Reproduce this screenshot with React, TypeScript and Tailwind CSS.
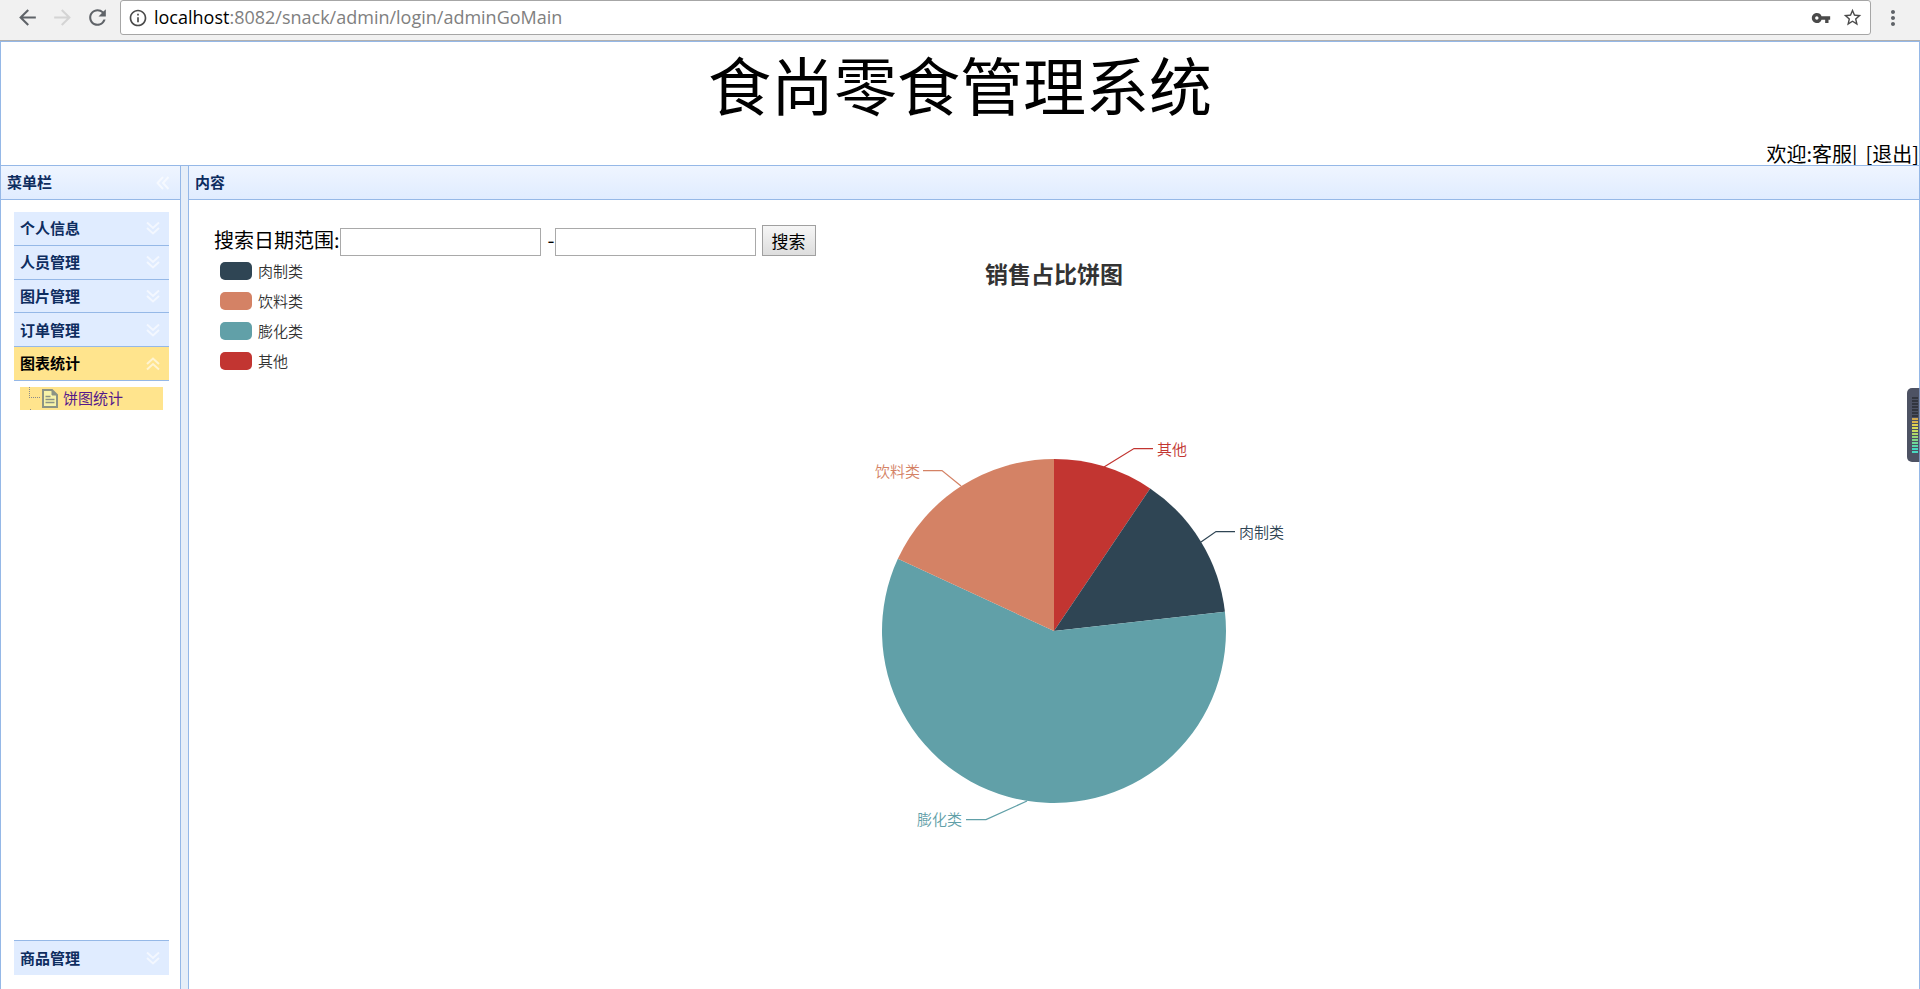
import { ReactNode } from "react";
import clsx from "clsx";
import { MdArrowBack, MdArrowForward, MdInfoOutline, MdMoreVert, MdRefresh, MdStarBorder, MdVpnKey } from "react-icons/md";

interface Slice {
  name: string;
  color: string;
  from: number;
  to: number;
  line: string;
  labelX: number;
  labelY: number;
  anchor: "start" | "end";
}

const RADIUS = 172;

// Angles are clockwise degrees from twelve o'clock
const slices: Slice[] = [
  { name: "其他", color: "#c23531", from: 0, to: 34, line: "50,-164 80,-182.5 99,-182.5", labelX: 103, labelY: -183, anchor: "start" },
  { name: "肉制类", color: "#2f4554", from: 34, to: 83.6, line: "147,-89 162,-99.5 181,-99.5", labelX: 185, labelY: -100, anchor: "start" },
  { name: "膨化类", color: "#61a0a8", from: 83.6, to: 294.8, line: "-27,170 -68,188.5 -88,188.5", labelX: -92, labelY: 187, anchor: "end" },
  { name: "饮料类", color: "#d48265", from: 294.8, to: 360, line: "-93,-145 -112,-160.5 -131,-160.5", labelX: -134, labelY: -161, anchor: "end" },
];

const legend = [
  { name: "肉制类", swatch: "bg-[#2f4554]" },
  { name: "饮料类", swatch: "bg-[#d48265]" },
  { name: "膨化类", swatch: "bg-[#61a0a8]" },
  { name: "其他", swatch: "bg-[#c23531]" },
];

const menus = ["个人信息", "人员管理", "图片管理", "订单管理", "图表统计"];

const point = (deg: number) => {
  const rad = (deg * Math.PI) / 180;
  return `${RADIUS * Math.sin(rad)},${-RADIUS * Math.cos(rad)}`;
};

const slicePath = ({ from, to }: Slice) =>
  `M0,0 L${point(from)} A${RADIUS},${RADIUS} 0 ${to - from > 180 ? 1 : 0} 1 ${point(to)} Z`;

const DoubleChevron = ({ className }: { className?: string }) => (
  <svg viewBox="0 0 14 14" className={clsx("size-[14px] fill-none stroke-white/60 stroke-2", className)}>
    <path d="M1 1.5 L7 7 L13 1.5 M1 7 L7 12.5 L13 7" />
  </svg>
);

const BrowserBar = () => (
  <div className="flex h-[41px] items-start gap-1 border-b border-[#b0b0b0] bg-[#f1f1f1] px-[15px] text-[#5f6368]">
    <div className="flex h-[35px] w-[101px] items-center gap-[10px]">
      <button aria-label="后退"><MdArrowBack className="size-[25px]" /></button>
      <button aria-label="前进" disabled className="text-[#d4d4d4]"><MdArrowForward className="size-[25px]" /></button>
      <button aria-label="刷新"><MdRefresh className="size-[25px]" /></button>
    </div>
    <div className="flex h-[35px] grow items-center rounded-[3px] border border-[#a6a6a6] bg-white px-[7px] text-[#4a4a4a]">
      <MdInfoOutline className="size-[20px]" />
      <p className="ml-[6px] grow font-['Open_Sans','Noto_Sans',sans-serif] text-[18px] font-normal text-[#808080]">
        <span className="text-black">localhost</span>:8082/snack/admin/login/adminGoMain
      </p>
      <MdVpnKey className="mr-[11px] size-[20px]" />
      <MdStarBorder className="size-[21px]" />
    </div>
    <button aria-label="菜单" className="flex h-[35px] items-center pl-[6px]"><MdMoreVert className="size-[24px]" /></button>
  </div>
);

const PanelHeader = ({ title, children }: { title: string; children?: ReactNode }) => (
  <div className="flex h-[35px] items-center justify-between border-y border-[#95b8e7] bg-linear-to-b from-[#eff5ff] to-[#e0ecff] pr-[10px] pl-[6px] text-[15px] font-bold text-[#0e2d5f]">
    <h2>{title}</h2>
    {children}
  </div>
);

const MenuHeader = ({ title, open }: { title: string; open?: boolean }) => (
  <button
    className={clsx(
      "flex w-full flex-1 items-center justify-between border-b border-[#95b8e7] pr-[9px] pl-[6px] text-[15px] font-bold",
      open ? "bg-[#ffe48d] text-black" : "bg-[#e0ecff] text-[#0e2d5f]"
    )}
  >
    {title}
    <DoubleChevron className={open ? "rotate-180" : undefined} />
  </button>
);

const Sidebar = () => (
  <aside className="flex w-[180px] flex-col border-r border-[#95b8e7]">
    <PanelHeader title="菜单栏">
      <DoubleChevron className="rotate-90" />
    </PanelHeader>
    <nav className="flex grow flex-col pt-[12px] pr-[11px] pb-[14px] pl-[13px]">
      <div className="flex h-[169px] flex-col">
        {menus.map((menu) => (
          <MenuHeader key={menu} title={menu} open={menu === "图表统计"} />
        ))}
      </div>
      <div className="grow px-[6px] pt-[6px]">
        <a href="#pie" className="flex h-[23px] items-center bg-[#ffe48d] text-[15px] text-[#551a8b]">
          <svg viewBox="0 0 43 23" className="h-[23px] w-[43px] shrink-0 fill-none">
            <path d="M9.5 0 V11 M9 10.5 H20 M10 22.5 h2" stroke="#8a8a8a" strokeDasharray="1 1" />
            <path d="M23 3 h9 l5 5 v12 h-14 z" fill="#f8f3a8" stroke="#8d9484" strokeWidth="2" />
            <path d="M32 3 v5 h5" fill="#8d9484" stroke="#8d9484" />
            <path d="M25.5 9.5 h5 M25.5 12.5 h9 M25.5 15.5 h9" stroke="#8d9484" strokeWidth="1.5" />
          </svg>
          饼图统计
        </a>
      </div>
      <div className="flex h-[35px] border-t border-[#95b8e7]">
        <button className="flex grow items-center justify-between bg-[#e0ecff] pr-[9px] pl-[6px] text-[15px] font-bold text-[#0e2d5f]">
          商品管理
          <DoubleChevron />
        </button>
      </div>
    </nav>
  </aside>
);

const SearchForm = () => (
  <form className="flex items-end text-[20px] text-black" onSubmit={(e) => e.preventDefault()}>
    <label htmlFor="start" className="leading-[32px]">搜索日期范围:</label>
    <input id="start" type="text" className="h-[28px] w-[201px] border border-[#a9a9a9] bg-white px-1 text-[16px]" />
    <label htmlFor="end" className="ml-[7px] leading-[32px]">-</label>
    <input id="end" type="text" className="h-[28px] w-[201px] border border-[#a9a9a9] bg-white px-1 text-[16px]" />
    <button className="ml-[6px] h-[31px] w-[54px] border border-[#a0a0a0] bg-linear-to-b from-[#f6f6f6] to-[#dddddd] text-[17px] leading-[28px]">
      搜索
    </button>
  </form>
);

const PieChart = () => (
  <section id="pie" className="text-[#333333]">
    <div className="grid grid-cols-[1fr_auto_1fr] pt-[6px]">
      <ul className="flex flex-col gap-[12px] pl-[6px]">
        {legend.map((item) => (
          <li key={item.name} className="flex h-[18px] items-center gap-[6px] text-[15px] font-[350]">
            <span className={clsx("h-[18px] w-[32px] rounded-[5px]", item.swatch)} />
            {item.name}
          </li>
        ))}
      </ul>
      <h3 className="text-[23px] leading-[22px] font-bold">销售占比饼图</h3>
    </div>
    <svg viewBox="-240 -200 480 400" className="mx-auto mt-[61px] h-[400px] w-[480px] font-[350]">
      {slices.map((slice) => (
        <g key={slice.name}>
          <path d={slicePath(slice)} fill={slice.color} />
          <polyline points={slice.line} fill="none" stroke={slice.color} strokeWidth="1.25" />
          <text x={slice.labelX} y={slice.labelY} textAnchor={slice.anchor} dominantBaseline="central" fill={slice.color} fontSize="15">
            {slice.name}
          </text>
        </g>
      ))}
    </svg>
  </section>
);

const meterBars = [
  "bg-[#32363f]", "bg-[#32363f]", "bg-[#32363f]", "bg-[#32363f]", "bg-[#32363f]", "bg-[#32363f]", "bg-[#32363f]",
  "bg-[#d0a850]", "bg-[#d9b54a]", "bg-[#e0d050]", "bg-[#d8dc58]", "bg-[#c8dc60]", "bg-[#b0d868]",
  "bg-[#98d878]", "bg-[#80d888]", "bg-[#70d898]", "bg-[#58d8a8]", "bg-[#48d8c0]", "bg-[#48d8c0]",
];

const EdgeMeter = () => (
  <div className="absolute top-[388px] right-0 flex h-[74px] w-[13px] flex-col items-end justify-center gap-[1px] rounded-l-[5px] border-r border-r-[#7a90b8] bg-[#4d5263] pr-[1px]">
    {meterBars.map((bar, i) => (
      <span key={i} className={clsx("h-[2px] w-[6px]", bar)} />
    ))}
  </div>
);

const App = () => (
  <div className="relative flex min-h-screen flex-col bg-white font-['Noto_Sans_CJK_SC',sans-serif]">
    <BrowserBar />
    <div className="flex grow flex-col border-x border-t border-[#95b8e7]">
      <header className="flex h-[123px] flex-col justify-between text-black">
        <h1 className="text-center text-[63px] leading-[82px]">食尚零食管理系统</h1>
        <p className="flex justify-end gap-[8px] text-[20px] leading-[22px]">
          <span>欢迎:客服|</span>
          <span>[<a href="#logout">退出</a>]</span>
        </p>
      </header>
      <div className="flex grow">
        <Sidebar />
        <div className="w-[7px] border-t border-[#95b8e7] bg-[#e6eef8]" />
        <main className="grow border-l border-[#95b8e7]">
          <PanelHeader title="内容" />
          <div className="px-[25px] pt-[24px]">
            <SearchForm />
            <PieChart />
          </div>
        </main>
      </div>
    </div>
    <EdgeMeter />
  </div>
);

export default App;
